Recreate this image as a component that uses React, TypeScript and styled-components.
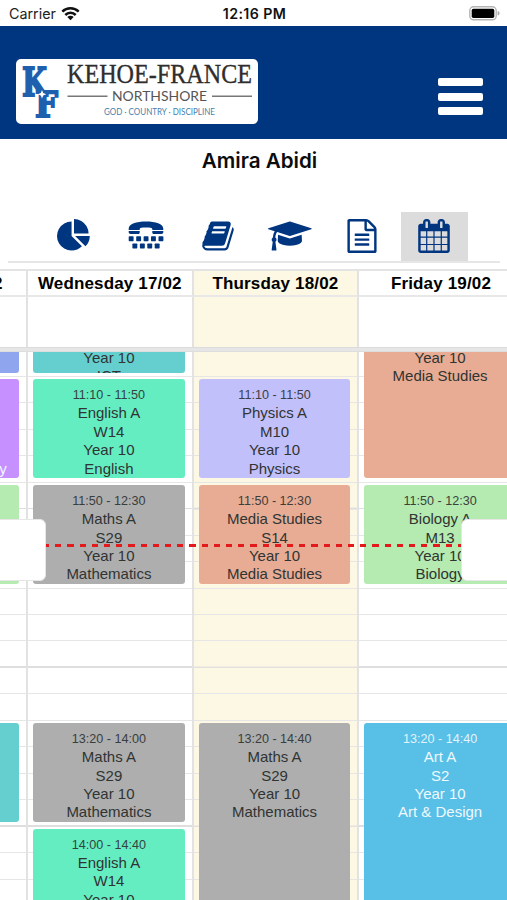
import React from 'react';
import styled, { createGlobalStyle } from 'styled-components';

const NAVY = '#003580';
const SLOT = 13.23; // height of five minutes

const GlobalStyle = createGlobalStyle`
  * { box-sizing: border-box; }
  body { margin: 0; background: #fff; font-family: "Liberation Sans", Arial, sans-serif; }
`;

const Screen = styled.div`
  width: 507px;
  height: 900px;
  overflow: hidden;
  display: flex;
  flex-direction: column;
  background: #fff;
`;

const StatusBar = styled.div`
  height: 26px;
  flex: none;
  display: grid;
  grid-template-columns: 1fr auto 1fr;
  align-items: center;
  padding: 1px 7px 0 9px;
  font: 400 14.3px/24px Inter, sans-serif;
  color: #222;
`;
const Carrier = styled.div`
  display: flex;
  align-items: center;
  gap: 5px;
`;
const Clock = styled.div`
  font-weight: 600;
  font-size: 14.2px;
  letter-spacing: 0.4px;
  color: #111;
`;
const BatterySlot = styled.div`
  display: flex;
  justify-content: flex-end;
`;

const Banner = styled.header`
  height: 113px;
  flex: none;
  display: flex;
  justify-content: space-between;
  align-items: flex-start;
  padding: 33px 24px 0 16px;
  background: ${NAVY};
`;
const LogoCard = styled.div`
  width: 242px;
  height: 65px;
  border-radius: 5px;
  background: #fff;
  overflow: hidden;
`;
const MenuButton = styled.button`
  margin: 19px 0 0;
  padding: 0;
  border: 0;
  background: none;
  width: 45px;
  display: grid;
  gap: 6.7px;
`;
const MenuBar = styled.span`
  height: 8px;
  border-radius: 2px;
  background: #fff;
`;

const Name = styled.h1`
  margin: 0;
  height: 73px;
  flex: none;
  padding: 10px 0 0 12px;
  text-align: center;
  font: 600 20.6px/24px Inter, sans-serif;
  color: #0c0c0c;
`;

const Tabs = styled.nav`
  height: 51px;
  flex: none;
  margin: 0 7px 0 8px;
  padding-left: 32px;
  display: flex;
  gap: 5.2px;
  border-bottom: 2px solid #e6e6e6;
`;
const Tab = styled.button<{ $active?: boolean }>`
  width: 67px;
  height: 49px;
  border: 0;
  padding: 0 0 1px;
  display: flex;
  align-items: center;
  justify-content: center;
  color: ${NAVY};
  background: ${p => (p.$active ? '#dcdcdc' : 'transparent')};
`;

const Calendar = styled.section`
  position: relative;
  margin-top: 6px;
  flex: 1;
  min-height: 0;
  display: flex;
  flex-direction: column;
  border-top: 2px solid #e4e4e4;
`;
const DayGrid = styled.div`
  display: grid;
  grid-template-columns: repeat(4, 165.6px);
  margin-left: -137.6px;
  width: 662.4px;
  flex: none;
`;
const DayHead = styled.div<{ $today?: boolean }>`
  height: 26px;
  border-right: 2px solid #e2e2e2;
  border-bottom: 2px solid #e8e8e8;
  background: ${p => (p.$today ? '#fcf8e3' : '#fff')};
  text-align: center;
  white-space: nowrap;
  font-weight: 700;
  font-size: 17px;
  line-height: 25px;
  letter-spacing: 0.16px;
  color: #000;
`;
const AllDay = styled.div<{ $today?: boolean }>`
  height: 51px;
  border-right: 2px solid #e2e2e2;
  background: ${p => (p.$today ? '#fcf8e3' : '#fff')};
`;
const Divider = styled.div`
  height: 5px;
  flex: none;
  margin-top: -1px;
  background: #e6e6e6;
  border-top: 1px solid #dcdcdc;
  border-bottom: 1px solid #dedede;
`;
const Scroller = styled.div`
  flex: 1;
  min-height: 0;
  overflow: hidden;
`;
const TimeGrid = styled(DayGrid)`
  margin-top: -81.7px;
`;
const DayColumn = styled.div<{ $today?: boolean }>`
  display: grid;
  grid-template-rows: repeat(54, ${SLOT}px);
  padding: 0 6.8px 0 5px;
  border-right: 2px solid #e2e2e2;
  background-color: ${p => (p.$today ? '#fcf8e3' : '#fff')};
  background-image:
    repeating-linear-gradient(to bottom, transparent 0 ${SLOT * 12 - 1.5}px, #dedede ${SLOT * 12 - 1.5}px ${SLOT * 12}px),
    repeating-linear-gradient(to bottom, transparent 0 ${SLOT * 2 - 1}px, #e6e6e6 ${SLOT * 2 - 1}px ${SLOT * 2}px);
  background-position: 0 ${-SLOT * 6 + 1}px, 0 1px;
  background-size: 100% 1200px, 100% 1200px;
`;
const Lesson = styled.article<{ $from: number; $to: number; $bg: string; $light?: boolean }>`
  grid-row: ${p => p.$from} / ${p => p.$to};
  grid-column: 1;
  margin: 3.4px 0;
  padding-top: 7px;
  border-radius: 3px;
  overflow: hidden;
  background: ${p => p.$bg};
  color: ${p => (p.$light ? '#eef9fe' : '#303433')};
  text-align: center;
  white-space: nowrap;
  font-size: 15px;
  line-height: 18.4px;
`;
const Time = styled.div`
  font-size: 12.6px;
  line-height: 18px;
  opacity: 0.92;
`;
const Line = styled.div``;

const NowLine = styled.div`
  position: absolute;
  left: 42.6px;
  right: 45px;
  top: 273px;
  height: 3px;
  background: repeating-linear-gradient(to right, #e3191c 0 6.3px, transparent 6.3px 12.2px);
`;
const EdgeButton = styled.button<{ $side: 'left' | 'right' }>`
  position: absolute;
  top: 248px;
  ${p => p.$side}: -6px;
  width: 52px;
  height: 62px;
  padding: 0;
  border: 1px solid #e6e6e6;
  border-radius: 6px;
  background: #fff;
`;

const TEAL = '#65cfcf', MINT = '#65edc2', GREY = '#aeaeae', LILAC = '#c2c0fb';
const SALMON = '#e8ac94', GREEN = '#b5eab1', SKY = '#58bfe6', VIOLET = '#c690fe', BLUE = '#8fa5ee';

type Item = { from: number; to: number; bg: string; light?: boolean; time: string; lines: string[] };
const days: { label: string; today?: boolean; items: Item[] }[] = [
  {
    label: 'Tuesday 16/02',
    items: [
      { from: 2, to: 9, bg: BLUE, time: '', lines: [] },
      { from: 9, to: 17, bg: VIOLET, light: true, time: '', lines: ['', '', '', 'Human Geography'] },
      { from: 17, to: 25, bg: GREEN, time: '', lines: [] },
      { from: 35, to: 43, bg: TEAL, time: '', lines: [] },
    ],
  },
  {
    label: 'Wednesday 17/02',
    items: [
      { from: 2, to: 9, bg: TEAL, time: '', lines: ['', '', 'Year 10', 'ICT'] },
      { from: 9, to: 17, bg: MINT, time: '11:10 - 11:50', lines: ['English A', 'W14', 'Year 10', 'English'] },
      { from: 17, to: 25, bg: GREY, time: '11:50 - 12:30', lines: ['Maths A', 'S29', 'Year 10', 'Mathematics'] },
      { from: 35, to: 43, bg: GREY, time: '13:20 - 14:00', lines: ['Maths A', 'S29', 'Year 10', 'Mathematics'] },
      { from: 43, to: 51, bg: MINT, time: '14:00 - 14:40', lines: ['English A', 'W14', 'Year 10'] },
    ],
  },
  {
    label: 'Thursday 18/02',
    today: true,
    items: [
      { from: 9, to: 17, bg: LILAC, time: '11:10 - 11:50', lines: ['Physics A', 'M10', 'Year 10', 'Physics'] },
      { from: 17, to: 25, bg: SALMON, time: '11:50 - 12:30', lines: ['Media Studies', 'S14', 'Year 10', 'Media Studies'] },
      { from: 35, to: 51, bg: GREY, time: '13:20 - 14:40', lines: ['Maths A', 'S29', 'Year 10', 'Mathematics'] },
    ],
  },
  {
    label: 'Friday 19/02',
    items: [
      { from: 2, to: 17, bg: SALMON, time: '', lines: ['', '', 'Year 10', 'Media Studies'] },
      { from: 17, to: 25, bg: GREEN, time: '11:50 - 12:30', lines: ['Biology A', 'M13', 'Year 10', 'Biology'] },
      { from: 35, to: 51, bg: SKY, light: true, time: '13:20 - 14:40', lines: ['Art A', 'S2', 'Year 10', 'Art & Design'] },
    ],
  },
];

const Glyph = ({ d, w = 1792 }: { d: string; w?: number }) => (
  <svg width={(w / 1792) * 34} height={34} viewBox={`0 0 ${w} 1792`} fill="currentColor"><path d={d} /></svg>
);

const PIE = 'M768 890l546 546q-106 108-247.500 168t-298.500 60q-209 0-385.500-103t-279.500-279.500-103-385.500 103-385.500 279.500-279.500 385.500-103v762zm187 6h773q0 157-60 298.500t-168 247.500zm709-128h-768v-768q209 0 385.500 103t279.500 279.500 103 385.500z';
const BOOK = 'M1703 478q40 57 18 129l-275 906q-19 64-76.500 107.500t-122.500 43.500h-923q-77 0-148.500-53.500t-99.500-131.500q-24-67-2-127 0-4 3-27t4-37q1-8-3-21.500t-3-19.500q2-11 8-21t16.500-23.500 16.500-23.500q23-38 45-91.500t30-91.500q3-10 .5-30t-.5-28q3-11 17-28t17-23q21-36 42-92t25-90q1-9-2.500-32t.5-28q4-13 22-30.500t22-22.500q19-26 42.500-84.500t27.500-96.500q1-8-3-25.500t-2-26.500q2-8 9-18t18-23 17-21q8-12 16.500-30.500t15-35 16-36 19.500-32 26.500-23.500 36-11.500 47.500 5.500l-1 3q38-9 51-9h761q74 0 114 56t18 130l-274 906q-36 119-71.500 153.500t-128.500 34.500h-869q-27 0-38 15-11 16-1 43 24 70 144 70h923q29 0 56-15.500t35-41.500l300-987q7-22 5-57 38 15 59 43zm-1064 2q-4 13 2 22.500t20 9.500h608q13 0 25.500-9.500t16.500-22.500l21-64q4-13-2-22.500t-20-9.500h-608q-13 0-25.500 9.500t-16.500 22.500zm-83 256q-4 13 2 22.500t20 9.500h608q13 0 25.500-9.500t16.500-22.500l21-64q4-13-2-22.500t-20-9.500h-608q-13 0-25.500 9.500t-16.500 22.500z';
const CAP = 'M1774 836l18 316q4 69-82 128t-235 93.500-323 34.500-323-34.500-235-93.500-82-128l18-316 574 181q22 7 48 7t48-7zm530-324q0 23-22 31l-1120 352q-4 1-10 1t-10-1l-652-206q-43 34-71 111.500t-34 178.500q63 36 63 109 0 69-58 107l58 433q2 14-8 25-9 11-24 11h-192q-15 0-24-11-10-11-8-25l58-433q-58-38-58-107 0-73 65-111 11-207 98-330l-333-104q-22-8-22-31t22-31l1120-352q4-1 10-1t10 1l1120 352q22 8 22 31z';
const FILE = 'M1596 380q28 28 48 76t20 88v1152q0 40-28 68t-68 28h-1344q-40 0-68-28t-28-68v-1600q0-40 28-68t68-28h896q40 0 88 20t76 48zm-444-244v376h376q-10-29-22-41l-313-313q-12-12-41-22zm384 1528v-1024h-416q-40 0-68-28t-28-68v-416h-768v1536h1280zm-1024-864q0-14 9-23t23-9h704q14 0 23 9t9 23v64q0 14-9 23t-23 9h-704q-14 0-23-9t-9-23v-64zm736 224q14 0 23 9t9 23v64q0 14-9 23t-23 9h-704q-14 0-23-9t-9-23v-64q0-14 9-23t23-9h704zm0 256q14 0 23 9t9 23v64q0 14-9 23t-23 9h-704q-14 0-23-9t-9-23v-64q0-14 9-23t23-9h704z';
const CALENDAR = 'M192 1664h288v-288h-288v288zm352 0h320v-288h-320v288zm-352-352h288v-320h-288v320zm352 0h320v-320h-320v320zm-352-384h288v-288h-288v288zm736 736h320v-288h-320v288zm-384-736h320v-288h-320v288zm768 736h288v-288h-288v288zm-384-352h320v-320h-320v320zm-352-864v-288q0-13-9.500-22.500t-22.500-9.500h-64q-13 0-22.500 9.500t-9.500 22.500v288q0 13 9.500 22.500t22.500 9.500h64q13 0 22.500-9.500t9.500-22.500zm736 864h288v-320h-288v320zm-384-384h320v-288h-320v288zm384 0h288v-288h-288v288zm32-480v-288q0-13-9.500-22.500t-22.500-9.500h-64q-13 0-22.500 9.500t-9.500 22.500v288q0 13 9.500 22.500t22.500 9.500h64q13 0 22.500-9.500t9.500-22.500zm384-64v1280q0 52-38 90t-90 38h-1408q-52 0-90-38t-38-90v-1280q0-52 38-90t90-38h128v-96q0-66 47-113t113-47h64q66 0 113 47t47 113v96h384v-96q0-66 47-113t113-47h64q66 0 113 47t47 113v96h128q52 0 90 38t38 90z';

const Tty = () => (
  <svg width="36" height="34" viewBox="0 0 36 34" fill="currentColor">
    <path d="M.7 9.800C.7 5 8.500 2.600 18 2.600S35.300 5 35.300 9.800v1.300H24.300V9.900C24.300 8.900 22 8.500 18 8.500s-6.300.4-6.300 1.400v1.200H.7z" />
    <path d="M.7 12.100h11v1.300c0 1-.8 1.600-1.800 1.600H2.600c-1.100 0-1.900-.7-1.900-1.700zM24.300 12.100h11v1.200c0 1-.8 1.700-1.900 1.700h-7.300c-1 0-1.800-.6-1.800-1.600z" />
    {[0.7, 8.200, 15.600, 23, 30.500].map(x => <rect key={x} x={x} y="17.300" width="4.900" height="4.900" rx=".7" />)}
    {[4.400, 11.900, 19.300, 26.700].map(x => <rect key={x} x={x} y="24.500" width="4.900" height="4.900" rx=".7" />)}
  </svg>
);

const Wifi = () => (
  <svg width="19" height="15" viewBox="0 0 19 15" fill="none" stroke="#111" strokeWidth="2.500">
    <path d="M1.300 5.700a11.700 11.700 0 0 1 16.400 0M4.300 9a7.300 7.300 0 0 1 10.400 0" />
    <path d="M9.500 14.200 6.300 11a4.500 4.500 0 0 1 6.400 0z" fill="#111" stroke="none" />
  </svg>
);

const Battery = () => (
  <svg width="31" height="15" viewBox="0 0 31 15">
    <rect x=".8" y=".8" width="26.400" height="13" rx="3.800" fill="#fff" stroke="#b5b5b5" strokeWidth="1.400" />
    <rect x="2.700" y="2.700" width="22.600" height="9.200" rx="1.700" fill="#000" />
    <path d="M28.600 5v4.600c1.200-.4 2-1.200 2-2.300s-.8-1.900-2-2.300z" fill="#aaa" />
  </svg>
);

const Logo = () => (
  <svg width="242" height="65" viewBox="0 0 242 65">
    <g fill="#1f60ae" stroke="#1f60ae" strokeWidth="1.900" fontFamily="DejaVu Serif" fontWeight="700">
      <text x="6" y="36.500" fontSize="39" textLength="25" lengthAdjust="spacingAndGlyphs">K</text>
      <text x="19" y="58" fontSize="35" textLength="23" lengthAdjust="spacingAndGlyphs">F</text>
    </g>
    <path d="m26 31 1.200 3 3 1.200-3 1.200-1.200 3-1.200-3-3-1.200 3-1.200z" fill="#fff" />
    <text x="51" y="23.500" fontFamily="Liberation Serif" fontSize="27" fill="#302d2d" stroke="#302d2d" strokeWidth=".35" textLength="185" lengthAdjust="spacingAndGlyphs">KEHOE-FRANCE</text>
    <path d="M51.500 37.200h40M196 37.200h40" stroke="#777" strokeWidth="1.500" />
    <text x="96" y="42.200" fontFamily="Lato" fontSize="14" fill="#555" textLength="95" lengthAdjust="spacingAndGlyphs">NORTHSHORE</text>
    <text x="88" y="55.800" fontFamily="Lato" fontSize="8.600" fill="#4a7fae" textLength="111" lengthAdjust="spacingAndGlyphs">GOD · COUNTRY · DISCIPLINE</text>
  </svg>
);

export default function App() {
  return (
    <Screen>
      <GlobalStyle />
      <StatusBar>
        <Carrier>Carrier <Wifi /></Carrier>
        <Clock>12:16 PM</Clock>
        <BatterySlot><Battery /></BatterySlot>
      </StatusBar>
      <Banner>
        <LogoCard><Logo /></LogoCard>
        <MenuButton aria-label="Menu"><MenuBar /><MenuBar /><MenuBar /></MenuButton>
      </Banner>
      <Name>Amira Abidi</Name>
      <Tabs>
        <Tab><Glyph d={PIE} /></Tab>
        <Tab><Tty /></Tab>
        <Tab><Glyph d={BOOK} /></Tab>
        <Tab><Glyph d={CAP} w={2304} /></Tab>
        <Tab><Glyph d={FILE} /></Tab>
        <Tab $active><Glyph d={CALENDAR} /></Tab>
      </Tabs>
      <Calendar>
        <DayGrid>
          {days.map(d => <DayHead key={d.label} $today={d.today}>{d.label}</DayHead>)}
          {days.map(d => <AllDay key={d.label} $today={d.today} />)}
        </DayGrid>
        <Divider />
        <Scroller>
          <TimeGrid>
            {days.map(d => (
              <DayColumn key={d.label} $today={d.today}>
                {d.items.map(it => (
                  <Lesson key={it.from} $from={it.from} $to={it.to} $bg={it.bg} $light={it.light}>
                    <Time>{it.time || '\u00a0'}</Time>
                    {it.lines.map((t, i) => <Line key={i}>{t || '\u00a0'}</Line>)}
                  </Lesson>
                ))}
              </DayColumn>
            ))}
          </TimeGrid>
        </Scroller>
        <NowLine />
        <EdgeButton $side="left" aria-label="Previous" />
        <EdgeButton $side="right" aria-label="Next" />
      </Calendar>
    </Screen>
  );
}
